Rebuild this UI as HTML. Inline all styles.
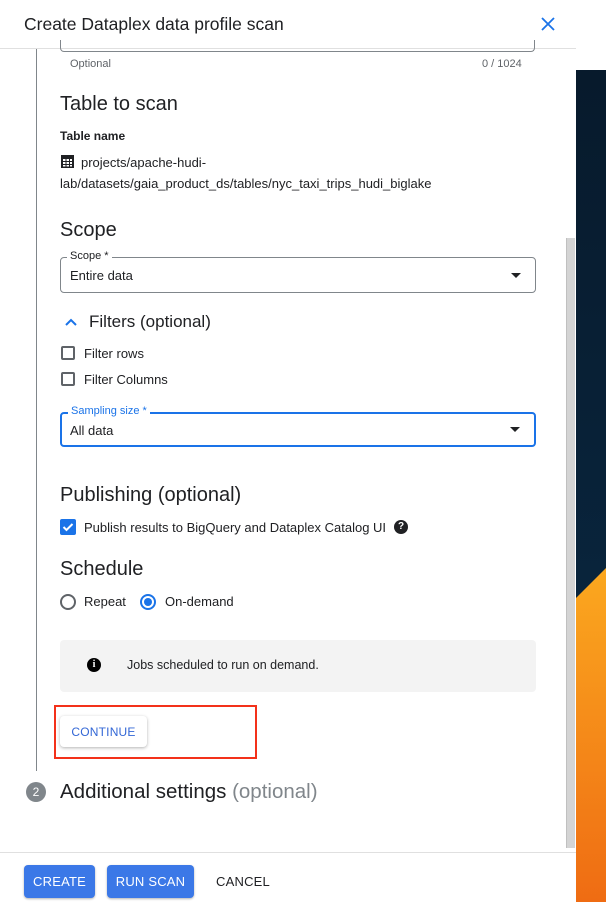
<!DOCTYPE html>
<html><head><style>
*{box-sizing:border-box;margin:0;padding:0}
body{width:606px;height:902px;position:relative;overflow:hidden;background:#fff;font-family:"Liberation Sans",Arial,sans-serif;color:#202124}
.a{position:absolute}
.t{font-size:13px}
h2{position:absolute;font-size:20px;font-weight:normal;color:#202124}
.cb{position:absolute;width:14px;height:14px;border:2px solid #5f6368;border-radius:2px}
.sel{position:absolute;border:1px solid #80868b;border-radius:4px;background:#fff}
.lbl{position:absolute;background:#fff;font-size:11px;padding:0 3px;top:-8px;left:6px}
.arr{position:absolute;right:14px;top:15px;width:0;height:0;border-left:5px solid transparent;border-right:5px solid transparent;border-top:5px solid #202124}
.btn{position:absolute;height:33px;border-radius:4px;font-size:13px;display:flex;align-items:center;justify-content:center;letter-spacing:.2px}
</style></head><body>
<div class="a" style="left:576px;top:70px;width:30px;height:832px;background:linear-gradient(#071a2c,#0a2a45)"></div>
<svg class="a" style="left:576px;top:560px" width="30" height="342"><defs><linearGradient id="g" x1="0" y1="0" x2="0" y2="1"><stop offset="0" stop-color="#fba81f"/><stop offset="1" stop-color="#ef6c13"/></linearGradient></defs><polygon points="0,38 30,8 30,342 0,342" fill="url(#g)"/></svg>
<div class="a" style="left:0;top:0;width:576px;height:902px;background:#fff"></div>
<div class="a" style="left:24px;top:14px;font-size:17.5px">Create Dataplex data profile scan</div>
<svg class="a" style="left:540px;top:16px" width="16" height="16"><path d="M2 2L14 14M14 2L2 14" stroke="#1a73e8" stroke-width="1.8"/></svg>
<div class="a" style="left:0;top:48px;width:576px;height:1px;background:#e0e0e0"></div>
<div class="a" style="left:566px;top:238px;width:9px;height:610px;background:#d4d4d4;border-left:1px solid #c0c0c0"></div>
<div class="a" style="left:36px;top:49px;width:1px;height:722px;background:#80868b"></div>
<div class="a" style="left:60px;top:40px;width:475px;height:12px;border:1px solid #80868b;border-top:none;border-radius:0 0 4px 4px"></div>
<div class="a" style="left:70px;top:58px;font-size:11px;color:#5f6368">Optional</div>
<div class="a" style="left:482px;top:58px;font-size:11px;color:#5f6368">0 / 1024</div>
<h2 style="left:60px;top:93px">Table to scan</h2>
<div class="a t" style="left:60px;top:129px;font-weight:bold;font-size:12px">Table name</div>
<svg class="a" style="left:61px;top:155px" width="13" height="13"><rect width="13" height="13" fill="#202124"/><g fill="#fff"><rect x="2" y="4" width="2.5" height="2"/><rect x="5.5" y="4" width="2.5" height="2"/><rect x="9" y="4" width="2" height="2"/><rect x="2" y="7" width="2.5" height="2"/><rect x="5.5" y="7" width="2.5" height="2"/><rect x="9" y="7" width="2" height="2"/><rect x="2" y="10" width="2.5" height="1.5"/><rect x="5.5" y="10" width="2.5" height="1.5"/><rect x="9" y="10" width="2" height="1.5"/></g></svg>
<div class="a" style="left:60px;top:152px;font-size:13px;line-height:21px;width:420px"><span style="padding-left:21px">projects/apache-hudi-</span><br>lab/datasets/gaia_product_ds/tables/nyc_taxi_trips_hudi_biglake</div>
<h2 style="left:60px;top:219px">Scope</h2>
<div class="sel" style="left:60px;top:257px;width:476px;height:36px"><span class="lbl">Scope *</span><span class="a t" style="left:9px;top:10px">Entire data</span><span class="arr"></span></div>
<svg class="a" style="left:64px;top:315px" width="14" height="14"><path d="M2 10L7 5L12 10" stroke="#1a73e8" stroke-width="2" fill="none"/></svg>
<div class="a" style="left:89px;top:312px;font-size:17px">Filters (optional)</div>
<div class="cb" style="left:61px;top:346px"></div><div class="a t" style="left:84px;top:346px">Filter rows</div>
<div class="cb" style="left:61px;top:372px"></div><div class="a t" style="left:84px;top:372px">Filter Columns</div>
<div class="sel" style="left:60px;top:412px;width:476px;height:35px;border:2px solid #1a73e8"><span class="lbl" style="color:#1a73e8;top:-9px">Sampling size *</span><span class="a t" style="left:8px;top:9px">All data</span><span class="arr" style="top:13px"></span></div>
<h2 style="left:60px;top:484px">Publishing (optional)</h2>
<div class="a" style="left:60px;top:519px;width:16px;height:16px;background:#1a73e8;border-radius:2px"><svg width="16" height="16"><path d="M3.5 8L6.5 11L12.5 5" stroke="#fff" stroke-width="2" fill="none"/></svg></div>
<div class="a t" style="left:84px;top:520px">Publish results to BigQuery and Dataplex Catalog UI</div>
<div class="a" style="left:394px;top:520px;width:14px;height:14px;border-radius:50%;background:#202124;color:#fff;font-size:10px;font-weight:bold;text-align:center;line-height:14px">?</div>
<h2 style="left:60px;top:558px">Schedule</h2>
<div class="a" style="left:60px;top:594px;width:16px;height:16px;border:2px solid #5f6368;border-radius:50%"></div>
<div class="a t" style="left:84px;top:594px">Repeat</div>
<div class="a" style="left:140px;top:594px;width:16px;height:16px;border:2px solid #1a73e8;border-radius:50%"><div style="margin:2px;width:8px;height:8px;border-radius:50%;background:#1a73e8"></div></div>
<div class="a t" style="left:165px;top:594px">On-demand</div>
<div class="a" style="left:60px;top:640px;width:476px;height:52px;background:#f3f3f3;border-radius:4px"></div>
<div class="a" style="left:87px;top:658px;width:14px;height:14px;border-radius:50%;background:#000;color:#fff;font-size:10px;font-weight:bold;text-align:center;line-height:14px;font-family:'Liberation Serif',serif">i</div>
<div class="a" style="left:127px;top:658px;font-size:12.5px">Jobs scheduled to run on demand.</div>
<div class="a" style="left:54px;top:705px;width:203px;height:54px;border:2px solid #f3311a"></div>
<div class="btn" style="left:60px;top:716px;width:87px;height:31px;color:#3367d6;background:#fff;box-shadow:0 1px 3px rgba(0,0,0,.3);font-size:12px">CONTINUE</div>
<div class="a" style="left:26px;top:782px;width:20px;height:20px;border-radius:50%;background:#80868b;color:#fff;font-size:12px;text-align:center;line-height:20px">2</div>
<div class="a" style="left:60px;top:780px;font-size:20.5px">Additional settings <span style="color:#80868b">(optional)</span></div>
<div class="a" style="left:0;top:852px;width:576px;height:1px;background:#e0e0e0"></div>
<div class="btn" style="left:24px;top:865px;width:71px;background:#3b78e7;color:#fff;box-shadow:0 1px 2px rgba(0,0,0,.3)">CREATE</div>
<div class="btn" style="left:107px;top:865px;width:87px;background:#3b78e7;color:#fff;box-shadow:0 1px 2px rgba(0,0,0,.3)">RUN SCAN</div>
<div class="btn" style="left:208px;top:865px;width:70px;color:#202124">CANCEL</div>
</body></html>
